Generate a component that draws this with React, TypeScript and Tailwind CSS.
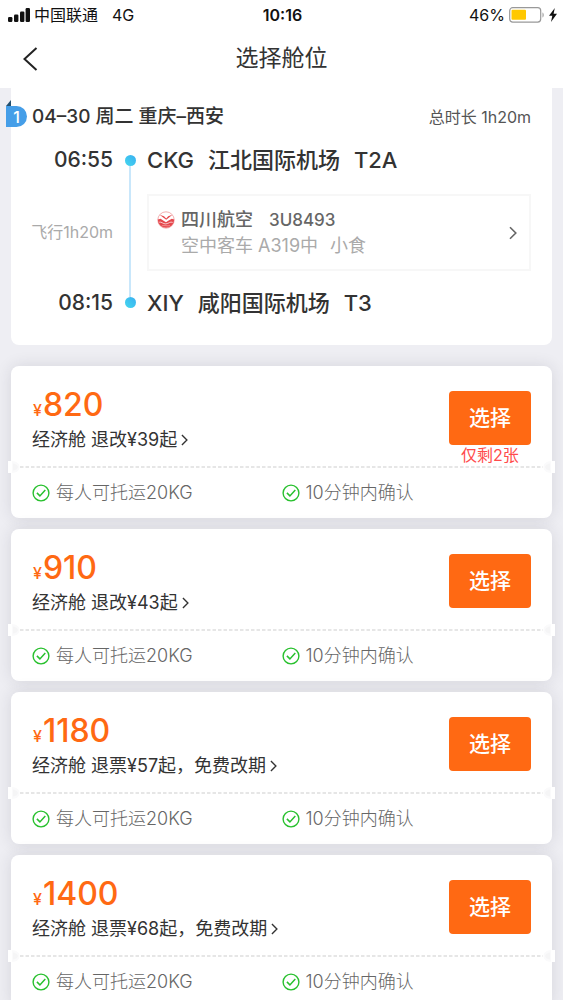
import React from "react";

type Fare = {
  price: number;
  rule: string;
  left?: string;
};

const fares: Fare[] = [
  { price: 820, rule: "退改¥39起", left: "仅剩2张" },
  { price: 910, rule: "退改¥43起" },
  { price: 1180, rule: "退票¥57起，免费改期" },
  { price: 1400, rule: "退票¥68起，免费改期" },
];

function Chevron({ className }: { className: string }) {
  return (
    <svg viewBox="0 0 8 14" className={className} fill="none" stroke="currentColor" strokeWidth="1.6" aria-hidden="true">
      <path d="M1 1.2 6.8 7 1 12.8" />
    </svg>
  );
}

function CheckCircle() {
  return (
    <svg viewBox="0 0 18 18" className="size-[18px] shrink-0" fill="none" stroke="#27c02d" strokeWidth="1.4" aria-hidden="true">
      <circle cx="9" cy="9" r="7.9" />
      <path d="m4.9 8.900 3 3 5.400-5.900" strokeWidth="1.5" />
    </svg>
  );
}

function AirlineLogo() {
  return (
    <svg viewBox="0 0 18 18" className="size-[18px] shrink-0" fill="none" aria-hidden="true">
      <circle cx="9" cy="9" r="8.2" fill="#fff" stroke="#f09a9c" strokeWidth="0.8" />
      <path d="M.8 8.600 3.600 7.800 7 10 9 11.200l2.200-1.500 3.600-1.900 2.400.8A8.200 8.200 0 0 1 .8 8.600Z" fill="#e5484d" />
      <path d="M2.600 3.800 7 5.300l2.200 2.100 2-2.200 4.200-1.500-3.600 3L9.200 8.800 6.500 6.700Z" fill="#e5484d" />
      <path d="M2.200 11.200c2.200-.8 3.800 1.900 6.600 1.700 2.800-.2 4.400-2.700 6.900-1.500" stroke="#fff" strokeWidth="0.7" />
      <path d="M4.800 14.800c2.800-.8 5.600.6 8.200-.2" stroke="#f6b5b7" strokeWidth="0.600" />
    </svg>
  );
}

function Notch({ className }: { className: string }) {
  return (
    <svg viewBox="0 0 12 12" className={className} aria-hidden="true">
      <path d="M0 0h3c6 0 8.500 3 8.500 6S9 12 3 12H0Z" fill="#fafafb" />
      <path d="M0 0h4v12H0Z" fill="#fff" />
      <path d="M5 2.500c3 .5 5 2 5 3.500S8 9 5 9.500Z" fill="#f5f5f6" />
    </svg>
  );
}

function StatusBar() {
  return (
    <div className="grid h-[29px] shrink-0 grid-cols-3 items-center pr-1.5 pl-2 text-base text-[#111]">
      <div className="flex items-center gap-1">
        <svg viewBox="0 0 22 14" className="h-3.5 w-[22px] shrink-0" fill="#111" aria-hidden="true">
          <rect x="0" y="9" width="4.400" height="5" rx="1.200" />
          <rect x="6" y="6.500" width="4.400" height="7.500" rx="1.200" />
          <rect x="12" y="3.500" width="4.400" height="10.500" rx="1.200" />
          <rect x="17.600" y="0" width="4.400" height="14" rx="1.200" />
        </svg>
        <span className="whitespace-nowrap">中国联通</span>
        <span className="ml-2.5">4G</span>
      </div>
      <time className="text-center font-semibold">10:16</time>
      <div className="flex items-center justify-end gap-1">
        <span>46%</span>
        <svg viewBox="0 0 36 16" className="h-4 w-9" fill="none" aria-hidden="true">
          <rect x="0.700" y="0.700" width="31" height="14.400" rx="3" stroke="#999" strokeWidth="1.200" />
          <rect x="2.500" y="2.800" width="14.500" height="10" rx="1" fill="#ffc800" />
          <path d="M33.500 5.500c1.600.5 1.600 4.500 0 5Z" fill="#999" />
        </svg>
        <svg viewBox="0 0 8 14" className="h-3.5 w-2" fill="#111" aria-hidden="true">
          <path d="M5.800 0 0 7.800h3.300L2 14l6-8.300H4.600Z" />
        </svg>
      </div>
    </div>
  );
}

function Airport({ code, name, terminal }: { code: string; name: string; terminal: string }) {
  return (
    <div className="flex h-9 items-center gap-3.5 text-[22px] whitespace-nowrap">
      <span>{code}</span>
      <span>{name}</span>
      <span>{terminal}</span>
    </div>
  );
}

function FlightSummary() {
  return (
    <section className="relative rounded-b-lg bg-white px-[21px] pt-[15px] pb-6">
      <div className="absolute top-3 -left-[5px]">
        <svg viewBox="0 0 5 6" className="h-1.5 w-[5px]" aria-hidden="true">
          <path d="M5 0v6H0Z" fill="#24506f" />
        </svg>
        <span className="flex h-[21px] w-[21px] items-center justify-center rounded-r-full bg-[#459ee8] text-base font-medium text-white">1</span>
      </div>
      <div className="flex h-7 items-center justify-between">
        <h2 className="text-[19px] font-medium whitespace-nowrap">04–30 周二 重庆–西安</h2>
        <p className="text-base whitespace-nowrap text-[#555]">总时长 1h20m</p>
      </div>
      <div className="mt-[11px] grid grid-cols-[81px_34px_1fr] text-[21px] font-medium">
        <time className="flex h-9 items-center justify-end">06:55</time>
        <div className="row-span-3 flex flex-col items-center py-[13px]">
          <span className="size-[11px] rounded-full bg-linear-to-bl from-[#3aaef0] to-[#45d8ee]" />
          <span className="w-0.5 flex-1 bg-[#c9e7fb]" />
          <span className="size-[11px] rounded-full bg-linear-to-bl from-[#3aaef0] to-[#45d8ee]" />
        </div>
        <Airport code="CKG" name="江北国际机场" terminal="T2A" />
        <div className="flex items-center justify-end text-base font-normal whitespace-nowrap text-[#aaa]">飞行1h20m</div>
        <button type="button" className="mt-4 mb-3.5 flex h-[77px] items-center border-2 border-[#f7f7f7] pr-3 pl-2 text-left text-[#666]">
          <span className="flex-1 text-lg leading-[26px] whitespace-nowrap">
            <span className="flex items-center gap-1.5 font-medium">
              <AirlineLogo />
              <span>四川航空</span>
              <span className="ml-2.5 text-[17px]">3U8493</span>
            </span>
            <span className="flex gap-3 pl-6 font-normal text-[#aaa]">
              <span>空中客车 A319中</span>
              <span>小食</span>
            </span>
          </span>
          <Chevron className="h-3.5 w-2" />
        </button>
        <time className="flex h-9 items-center justify-end">08:15</time>
        <Airport code="XIY" name="咸阳国际机场" terminal="T3" />
      </div>
    </section>
  );
}

function FareCard({ fare }: { fare: Fare }) {
  return (
    <li className="relative rounded-lg bg-white px-[21px] shadow-[0_0_16px_rgba(40,40,60,0.12)]">
      <div className="flex h-[100px] justify-between">
        <div className="pt-[19px]">
          <p className="flex h-10 items-baseline gap-px pl-px font-medium text-[#ff6913]">
            <span className="text-base leading-10">¥</span>
            <strong className="text-[32px] leading-10 font-medium">{fare.price}</strong>
          </p>
          <a href="#rules" className="flex items-center gap-1 text-lg leading-[30px] whitespace-nowrap text-[#333]">
            <span>经济舱 {fare.rule}</span>
            <Chevron className="h-3 w-[7px]" />
          </a>
        </div>
        <div className="flex flex-col items-center pt-[25px]">
          <button type="button" className="h-[54px] w-[82px] rounded bg-[#ff6913] text-[21px] font-medium text-white">
            选择
          </button>
          {fare.left && <p className="text-base leading-5 text-[#ff4b4b]">{fare.left}</p>}
        </div>
      </div>
      <Notch className="absolute top-[95px] -left-[3px] size-3" />
      <Notch className="absolute top-[95px] -right-[3px] size-3 rotate-180" />
      <svg className="-mx-3 block h-0.5 w-[calc(100%+24px)]" aria-hidden="true">
        <line x1="0" y1="1" x2="100%" y2="1" stroke="#dedede" strokeWidth="1.4" strokeDasharray="3.5 2" />
      </svg>
      <div className="grid h-[50px] grid-cols-2 items-center text-lg font-light whitespace-nowrap text-[#666]">
        <span className="flex items-center gap-1.5">
          <CheckCircle />
          每人可托运20KG
        </span>
        <span className="flex items-center gap-1.5">
          <CheckCircle />
          10分钟内确认
        </span>
      </div>
    </li>
  );
}

export default function App() {
  return (
    <div className="flex h-screen flex-col bg-[#eeeef3] font-['Inter','Noto_Sans_CJK_SC',sans-serif] text-[#333]">
      <header className="shrink-0 bg-white">
        <StatusBar />
        <div className="grid h-[59px] grid-cols-[60px_1fr_60px] items-center">
          <button type="button" aria-label="返回" className="flex h-full items-center pl-[22px]">
            <svg viewBox="0 0 16 24" className="h-6 w-4" fill="none" stroke="#222" strokeWidth="2" aria-hidden="true">
              <path d="M14.500 1 2.500 12l12 11" />
            </svg>
          </button>
          <h1 className="text-center text-[23px]">选择舱位</h1>
        </div>
      </header>
      <main className="min-h-0 flex-1 overflow-x-hidden overflow-y-auto px-[11px] pb-3 [scrollbar-width:none]">
        <FlightSummary />
        <ul className="mt-[21px] flex flex-col gap-[11px]">
          {fares.map((fare) => (
            <FareCard key={fare.price} fare={fare} />
          ))}
        </ul>
      </main>
    </div>
  );
}
